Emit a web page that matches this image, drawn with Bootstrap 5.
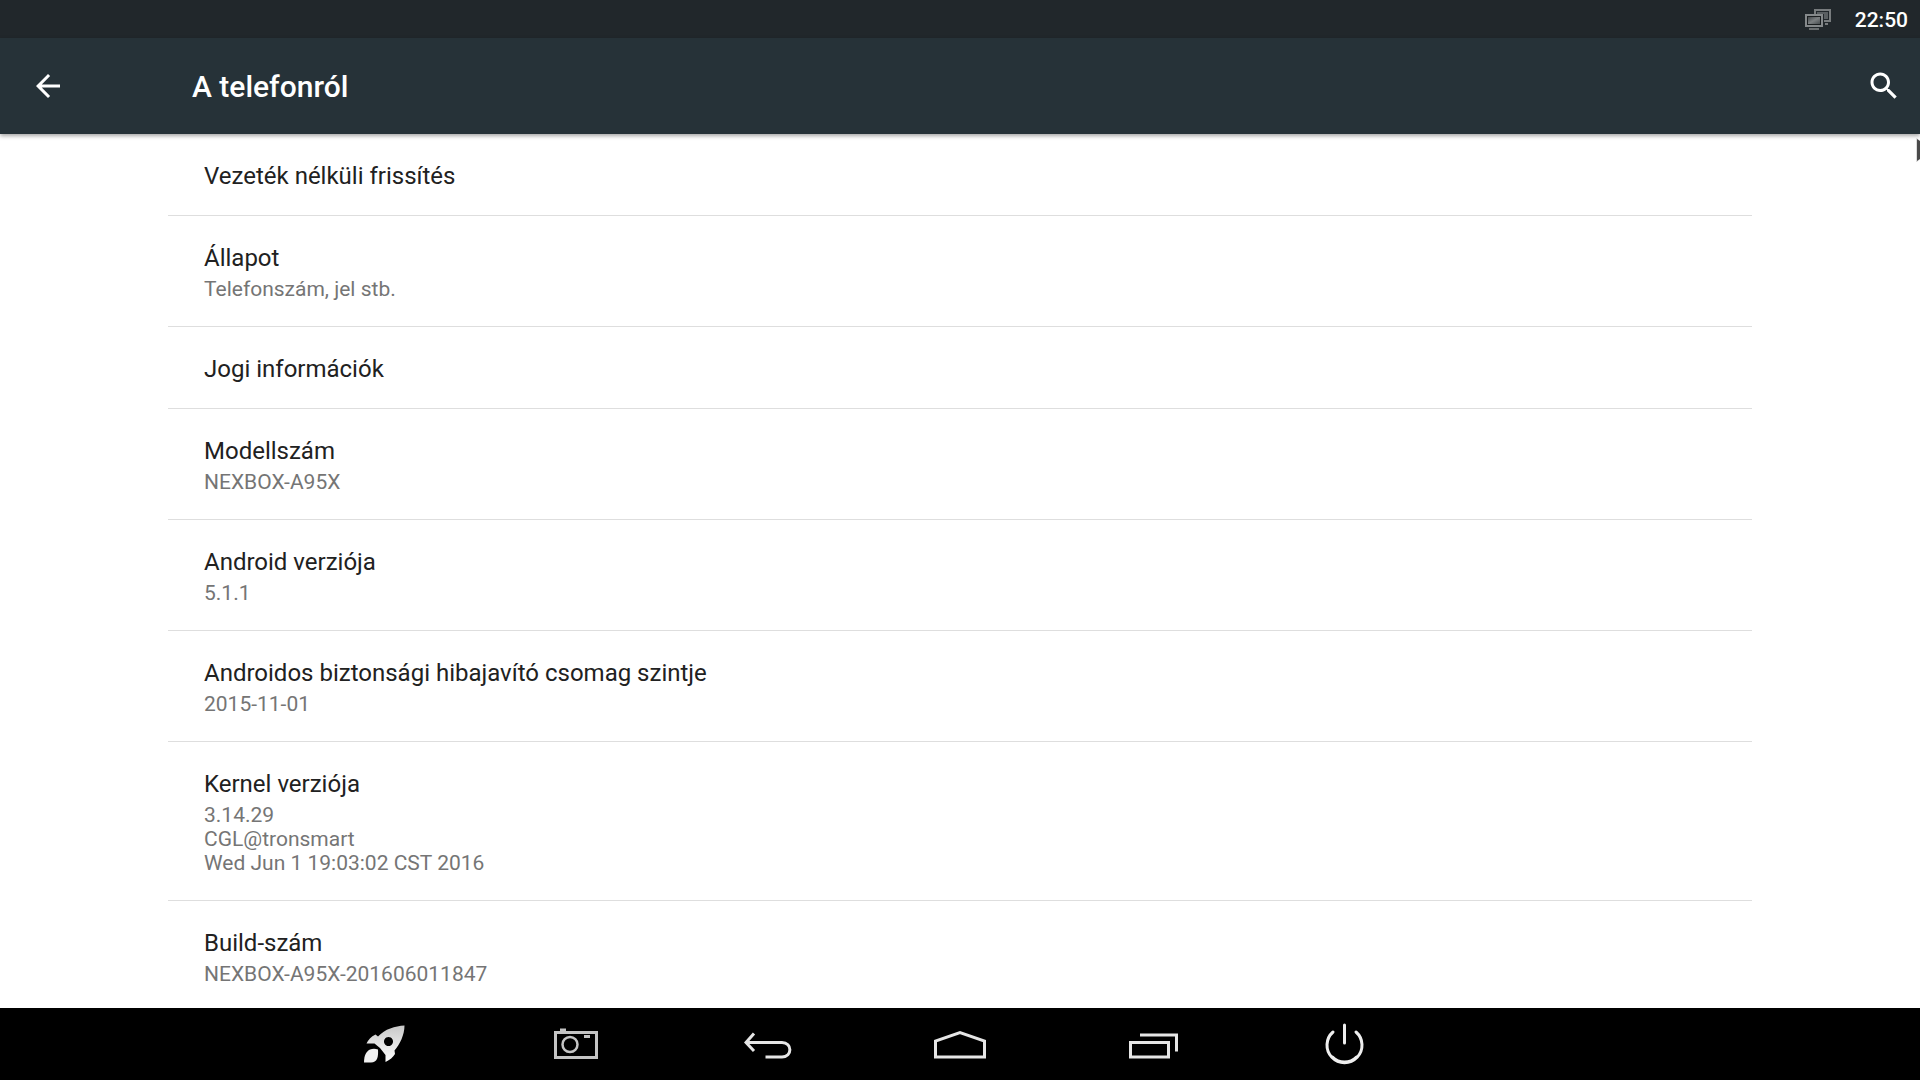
<!DOCTYPE html>
<html lang="hu">
<head>
<meta charset="utf-8">
<meta name="viewport" content="width=device-width, initial-scale=1">
<title>A telefonról</title>
<link href="https://cdn.jsdelivr.net/npm/bootstrap@5.3.0/dist/css/bootstrap.min.css" rel="stylesheet">
<style>
  body { font-family: Roboto, "Noto Sans", sans-serif; background: #fff; color: #212121; }
  svg { display: block; }
  .status-bar { height: 38px; padding: 2px 12px 0 0; background: #21272b; color: #fff; font-size: 21px; line-height: 24px; font-weight: 500; }
  .app-bar { height: 96px; padding: 0 18px 0 30px; background: #263238; color: #fff; box-shadow: 0 2px 4px rgba(0,0,0,.35); z-index: 1; }
  .app-bar h1 { font-size: 30px; line-height: 36px; font-weight: 500; margin: 0 0 0 126px; padding-top: 2px; }
  .icon-btn { background: none; border: 0; padding: 0; color: inherit; }
  .pref-list { padding: 0 168px; }
  .pref-list .list-group-item { padding: 29px 36px 25px; border-color: #dedede; color: #212121; background: transparent; }
  .pref-title { font-size: 24px; line-height: 27px; font-weight: 400; margin: 0; }
  .pref-summary { font-size: 21px; line-height: 24px; color: #757575; margin: 5px 0 0; }
  .nav-keys { height: 72px; background: #000; padding: 0 15%; }
  .nav-keys .icon-btn { width: calc(100% / 7); }
  .pointer { top: 138px; right: 0; }
</style>
<script src="https://cdn.jsdelivr.net/npm/bootstrap@5.3.0/dist/js/bootstrap.bundle.min.js"></script>
</head>
<body class="vh-100 d-flex flex-column overflow-hidden position-relative">
<div class="status-bar d-flex align-items-center justify-content-end flex-shrink-0">
  <svg class="me-4" width="28" height="22" viewBox="0 0 28 22" aria-hidden="true">
    <defs><linearGradient id="screen" x1="0" y1="0" x2="1" y2="1"><stop offset="0" stop-color="#43484b"/><stop offset=".5" stop-color="#7b7f81"/><stop offset="1" stop-color="#484d50"/></linearGradient></defs>
    <path d="M12 5V1h15v11h-6M22 15h3" fill="none" stroke="#787c7e" stroke-width="2"/>
    <path d="M14 3h11v7h-4V5h-7z" fill="#5a5f62"/>
    <rect x="3" y="6" width="16" height="11" fill="#1a1e20" stroke="#85898b" stroke-width="2"/>
    <rect x="5" y="8" width="12" height="7" fill="url(#screen)"/>
    <path d="M6 20h10" stroke="#6a6e70" stroke-width="2"/>
  </svg>
  <span>22:50</span>
</div>
<header class="app-bar d-flex align-items-center flex-shrink-0 position-relative">
  <button class="icon-btn" type="button" aria-label="Vissza"><svg width="36" height="36" viewBox="0 0 24 24" fill="currentColor"><path d="M20 11H7.83l5.59-5.59L12 4l-8 8 8 8 1.41-1.41L7.83 13H20v-2z"/></svg></button>
  <h1>A telefonról</h1>
  <button class="icon-btn ms-auto" type="button" aria-label="Keresés"><svg width="36" height="36" viewBox="0 0 24 24" fill="currentColor"><path d="M15.5 14h-.79l-.28-.27C15.41 12.59 16 11.11 16 9.5 16 5.91 13.09 3 9.5 3S3 5.91 3 9.5 5.91 16 9.5 16c1.61 0 3.09-.59 4.23-1.57l.27.28v.79l5 4.99L20.49 19l-4.99-5zm-6 0C7.01 14 5 11.99 5 9.5S7.01 5 9.5 5 14 7.01 14 9.5 11.99 14 9.5 14z"/></svg></button>
</header>
<main class="pref-list flex-grow-1 overflow-hidden">
  <div class="list-group list-group-flush">
    <a href="#" class="list-group-item"><h2 class="pref-title">Vezeték nélküli frissítés</h2></a>
    <a href="#" class="list-group-item"><h2 class="pref-title">Állapot</h2><p class="pref-summary">Telefonszám, jel stb.</p></a>
    <a href="#" class="list-group-item"><h2 class="pref-title">Jogi információk</h2></a>
    <a href="#" class="list-group-item"><h2 class="pref-title">Modellszám</h2><p class="pref-summary">NEXBOX-A95X</p></a>
    <a href="#" class="list-group-item"><h2 class="pref-title">Android verziója</h2><p class="pref-summary">5.1.1</p></a>
    <a href="#" class="list-group-item"><h2 class="pref-title">Androidos biztonsági hibajavító csomag szintje</h2><p class="pref-summary">2015-11-01</p></a>
    <a href="#" class="list-group-item"><h2 class="pref-title">Kernel verziója</h2><p class="pref-summary">3.14.29<br>CGL@tronsmart<br>Wed Jun 1 19:03:02 CST 2016</p></a>
    <a href="#" class="list-group-item"><h2 class="pref-title">Build-szám</h2><p class="pref-summary">NEXBOX-A95X-201606011847</p></a>
  </div>
</main>
<nav class="nav-keys d-flex flex-shrink-0" aria-label="Navigáció">
  <button class="icon-btn d-flex justify-content-center align-items-center" type="button" aria-label="Gyorsítás">
    <svg width="48" height="48" viewBox="0 0 48 48"><defs><linearGradient id="rk" x1="0" y1="0" x2="0" y2="1"><stop offset="0" stop-color="#c8c8c8"/><stop offset="1" stop-color="#fff"/></linearGradient></defs>
    <path fill="url(#rk)" fill-rule="evenodd" d="M44.500 5.500C35 6 25 9 18 16.500L15.500 14.500C11 16.500 8 20 6.500 23.500L14.500 23.500L20 28L25.500 35L25.500 42C30 40 33 37 35 34L34.500 30.500C40 24 44.500 15 44.500 5.500ZM28.500 17a4.500 4.500 0 1 0 .01 0Z"/>
    <path fill="#f0f0f0" d="M4 42.500c0-7 2-11 6-13q4-1.500 8 0c.5 8-1 13-7 13z"/></svg>
  </button>
  <button class="icon-btn d-flex justify-content-center align-items-center" type="button" aria-label="Képernyőkép">
    <svg width="48" height="48" viewBox="0 0 48 48" fill="none" stroke="#c4c4c4"><rect x="3.500" y="12.500" width="41" height="25" stroke-width="3"/><circle cx="18" cy="24.500" r="7.500" stroke-width="2.500"/><path d="M8 10h6M32 16.500h6" stroke-width="3"/></svg>
  </button>
  <button class="icon-btn d-flex justify-content-center align-items-center" type="button" aria-label="Vissza">
    <svg width="48" height="48" viewBox="0 0 48 48" fill="none" stroke="#e6e6e6" stroke-width="3"><path d="M10 13.500L2 22.500L10 31M2 22.500H38c10.500 0 10.500 14.500 0 14.500H21.500"/></svg>
  </button>
  <button class="icon-btn d-flex justify-content-center align-items-center" type="button" aria-label="Kezdőlap">
    <svg width="54" height="48" viewBox="0 0 54 48" fill="none" stroke="#e6e6e6" stroke-width="3"><path d="M2.500 37V21L27 12.500L51.500 21V37Z"/></svg>
  </button>
  <button class="icon-btn d-flex justify-content-center align-items-center" type="button" aria-label="Legutóbbiak">
    <svg width="52" height="48" viewBox="0 0 52 48" fill="none" stroke="#e6e6e6" stroke-width="3"><rect x="4.500" y="22.500" width="38" height="14.500"/><path d="M14 15H50.500V31.500"/></svg>
  </button>
  <button class="icon-btn d-flex justify-content-center align-items-center" type="button" aria-label="Kikapcsolás">
    <svg width="48" height="48" viewBox="0 0 48 48" fill="none" stroke="#eee" stroke-width="3" stroke-linecap="round"><path d="M24.500 5V23M13 12A17.500 17.500 0 1 0 36 12"/><path d="M12.500 37A17 17 0 0 0 36.500 37"/></svg>
  </button>
</nav>
<svg class="pointer position-absolute z-3" width="4" height="24" viewBox="0 0 4 24" aria-hidden="true"><path d="M0 0h1l3 3v18l-3 3H0z" fill="#ddd"/><path d="M1 1l3 2v18l-3 2z" fill="#4a4a4a"/></svg>
</body>
</html>
